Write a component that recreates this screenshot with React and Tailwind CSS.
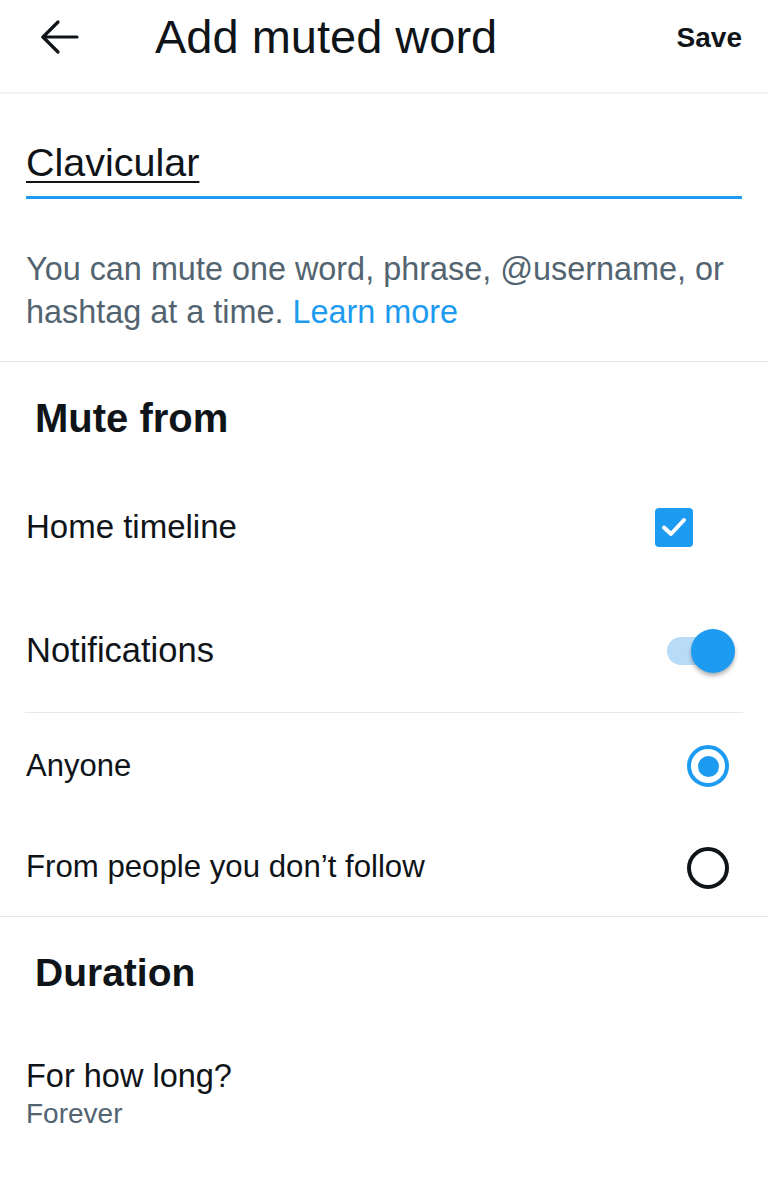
import React, { useState } from "react";

const font = { fontFamily: '"Liberation Sans", Arial, sans-serif' };

const BackArrow = () => (
  <svg width="40" height="36" viewBox="0 0 40 36" fill="none">
    <path d="M3 18 H37" stroke="#0f1419" strokeWidth="3.2" strokeLinecap="round" />
    <path d="M18 3 L3 18 L18 33" stroke="#0f1419" strokeWidth="3.2" strokeLinecap="round" strokeLinejoin="round" />
  </svg>
);

const Checkbox = ({ checked }) => (
  <div className="w-[38px] h-[39px] rounded-[4px] bg-[#1d9bf0] flex items-center justify-center">
    {checked && (
      <svg width="28" height="24" viewBox="0 0 28 24" fill="none">
        <path d="M4 12.5 L11 19 L24 5" stroke="white" strokeWidth="4" strokeLinecap="round" strokeLinejoin="round" />
      </svg>
    )}
  </div>
);

const Toggle = () => (
  <div className="relative w-[68px] h-[44px] flex items-center">
    <div className="w-[54px] h-[28px] rounded-full bg-[#b8dcf8]" />
    <div className="absolute right-0 top-0 w-[44px] h-[44px] rounded-full bg-[#1d9bf0] shadow-[0_3px_4px_rgba(0,0,0,0.3)]" />
  </div>
);

const Radio = ({ selected }) =>
  selected ? (
    <div className="w-[42px] h-[42px] rounded-full border-[4px] border-[#1d9bf0] flex items-center justify-center">
      <div className="w-[21px] h-[21px] rounded-full bg-[#1d9bf0]" />
    </div>
  ) : (
    <div className="w-[42px] h-[42px] rounded-full border-[4px] border-[#0f1419]" />
  );

export default function App() {
  const [word] = useState("Clavicular");

  return (
    <div className="w-[768px] h-[1200px] bg-white text-[#0f1419] overflow-hidden" style={font}>
      {/* header */}
      <div className="h-[94px] flex items-center border-b-2 border-[#eff3f4]">
        <div className="pl-[40px] w-[155px] -mt-[18px]">
          <BackArrow />
        </div>
        <div className="flex-1 text-[47px] leading-[52px] -mt-[18px]">Add muted word</div>
        <div className="pr-[26px] text-[28px] font-bold -mt-[16px]">Save</div>
      </div>

      {/* input */}
      <div className="px-[26px] pt-[46px] pb-[27px] border-b border-[#e4e9eb]">
        <div className="text-[39.5px] leading-[44px] underline decoration-2 underline-offset-[5px]">{word}</div>
        <div className="mt-[12px] h-[3px] bg-[#1d9bf0]" />
        <div className="mt-[49px] text-[32.4px] leading-[43px] text-[#536471]">
          <div>You can mute one word, phrase, @username, or</div>
          <div className="flex gap-[9px]">
            <span>hashtag at a time.</span>
            <span className="text-[#1d9bf0]">Learn more</span>
          </div>
        </div>
      </div>

      {/* mute from */}
      <div className="pl-[35px] pt-[33px] pb-[24px] text-[40px] leading-[46px] font-bold">Mute from</div>

      <div className="h-[124px] flex items-center justify-between pl-[26px] pr-[75px]">
        <span className="text-[33px]">Home timeline</span>
        <Checkbox checked />
      </div>

      <div className="h-[123px] flex items-center justify-between pl-[26px] pr-[33px]">
        <span className="text-[34.5px]">Notifications</span>
        <Toggle />
      </div>

      <div className="mx-[25px] h-px bg-[#e4e9eb]" />

      <div className="h-[106px] flex items-center justify-between pl-[26px] pr-[39px]">
        <span className="text-[31px]">Anyone</span>
        <Radio selected />
      </div>

      <div className="h-[98px] flex items-center justify-between pl-[26px] pr-[39px] border-b border-[#e4e9eb]">
        <span className="text-[31.2px]">From people you don’t follow</span>
        <Radio />
      </div>

      {/* duration */}
      <div className="pl-[35px] pt-[33px] text-[39px] leading-[46px] font-bold">Duration</div>

      <div className="pl-[26px] mt-[61px]">
        <div className="text-[32.5px] leading-[38px]">For how long?</div>
        <div className="mt-[2px] text-[28px] leading-[34px] text-[#536471]">Forever</div>
      </div>
    </div>
  );
}
